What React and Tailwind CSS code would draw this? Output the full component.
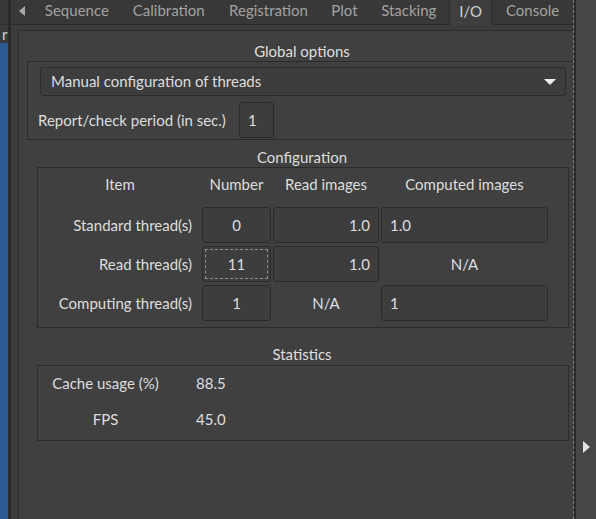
import React from "react";

const tabs = [
  { label: "Sequence", w: "w-[88px]" },
  { label: "Calibration", w: "w-[96px]" },
  { label: "Registration", w: "w-[104px]" },
  { label: "Plot", w: "w-[48px]" },
  { label: "Stacking", w: "w-[81px]" },
  { label: "I/O", w: "w-[43px]", active: true },
  { label: "Console", w: "w-[81px]" },
];

const Entry = ({ value, align = "center", focused }) => {
  const alignClass =
    align === "right"
      ? "justify-end pr-[8px]"
      : align === "left"
      ? "justify-start pl-[8px]"
      : "justify-center";
  return (
    <div
      className={
        "h-full rounded-[3px] border border-[#2b2b2b] bg-[#3d3d3d] flex items-center text-[#dcdfe2] " +
        alignClass +
        (focused
          ? " outline-1 outline-dashed outline-[#8a8a8a] outline-offset-[-4px]"
          : "")
      }
    >
      {value}
    </div>
  );
};

const Plain = ({ children }) => (
  <div className="h-full flex items-center justify-center text-[#dcdfe2]">
    {children}
  </div>
);

const Label = ({ children }) => (
  <div className="h-full flex items-center justify-end pr-[8px]">{children}</div>
);

export default function App() {
  return (
    <div className="w-[596px] h-[519px] flex overflow-hidden bg-[#3c3c3c] text-[15px] text-[#dedede] font-[family-name:Lato,sans-serif]">
      {/* left strip of the other pane */}
      <div className="w-[8px] shrink-0 flex flex-col">
        <div className="h-[25px] bg-[#383838] border-b border-[#2e2e2e]" />
        <div className="h-[18px] bg-[#3a3a3a] pl-[2px] leading-[18px] text-[#d4d4d4] overflow-hidden">
          r
        </div>
        <div className="flex-1 bg-[#2c5b91]" />
      </div>
      <div className="w-[3px] shrink-0 bg-[#2a2a2a]" />

      {/* notebook */}
      <div className="w-[562px] shrink-0 flex flex-col">
        <div className="h-[25px] flex bg-[#383838]">
          <div className="w-[22px] flex items-center justify-center border-b border-[#2c2c2c] pb-[2px]">
            <svg width="6" height="10" viewBox="0 0 6 10">
              <path d="M6 0 L0 5 L6 10 Z" fill="#a8a8a8" />
            </svg>
          </div>
          {tabs.map((t) =>
            t.active ? (
              <div
                key={t.label}
                className={
                  t.w +
                  " flex items-center justify-center pb-[3px] bg-[#3e3e3e] border-l border-r border-[#2c2c2c] text-[#c9d3dc]"
                }
              >
                {t.label}
              </div>
            ) : (
              <div
                key={t.label}
                className={
                  t.w +
                  " flex items-center justify-center pb-[3px] border-b border-[#2c2c2c] text-[#a2a2a2]"
                }
              >
                {t.label}
              </div>
            )
          )}
        </div>

        <div className="flex-1 pl-[7px] pt-[5px]">
          <div className="h-[600px] border-l border-t border-[#2c2c2c] bg-[#404040] flex flex-col">
            {/* Global options */}
            <div className="pl-[12px] pt-[11px] pb-[1px] leading-[18px] text-center">
              Global options
            </div>
            <div className="ml-[8px] h-[79px] border-l border-t border-b border-[#2c2c2c] pl-[10px] pt-[5px]">
              <div className="ml-[2px] w-[526px] h-[29px] rounded-[3px] border border-[#2c2c2c] bg-[#3d3d3d] flex items-center justify-between pl-[10px] pr-[9px]">
                <span>Manual configuration of threads</span>
                <svg width="12" height="6" viewBox="0 0 12 6">
                  <path d="M0 0 L12 0 L6 6 Z" fill="#ececec" />
                </svg>
              </div>
              <div className="mt-[6px] flex items-center h-[36px]">
                <div className="w-[201px]">Report/check period (in sec.)</div>
                <div className="w-[35px] h-[36px]">
                  <Entry value="1" align="left" />
                </div>
              </div>
            </div>

            {/* Configuration */}
            <div className="pl-[12px] pt-[8px] pb-[1px] leading-[18px] text-center">
              Configuration
            </div>
            <div className="ml-[18px] w-[532px] border border-[#2c2c2c] pl-[10px] pb-[6px]">
              <div className="grid grid-cols-[152px_69px_106px_167px] grid-rows-[36px_36px_36px_36px] gap-x-[2px] gap-y-[3px]">
                <div className="flex items-center justify-center pr-[8px] pb-[4px]">Item</div>
                <div className="flex items-center justify-center pb-[4px]">Number</div>
                <div className="flex items-center justify-center pb-[4px]">Read images</div>
                <div className="flex items-center justify-center pb-[4px]">Computed images</div>

                <Label>Standard thread(s)</Label>
                <Entry value="0" />
                <Entry value="1.0" align="right" />
                <Entry value="1.0" align="left" />

                <Label>Read thread(s)</Label>
                <Entry value="11" focused />
                <Entry value="1.0" align="right" />
                <Plain>N/A</Plain>

                <Label>Computing thread(s)</Label>
                <Entry value="1" />
                <Plain>N/A</Plain>
                <Entry value="1" align="left" />
              </div>
            </div>

            {/* Statistics */}
            <div className="pl-[12px] pt-[17px] pb-[2px] leading-[18px] text-center">
              Statistics
            </div>
            <div className="ml-[18px] w-[532px] h-[76px] border border-[#2c2c2c] pl-[10px]">
              <div className="flex items-center h-[35px]">
                <div className="w-[115px] text-center">Cache usage (%)</div>
                <div className="ml-[33px] text-[#dcdfe2]">88.5</div>
              </div>
              <div className="flex items-center h-[36px]">
                <div className="w-[115px] text-center">FPS</div>
                <div className="ml-[33px] text-[#dcdfe2]">45.0</div>
              </div>
            </div>
          </div>
        </div>
      </div>

      {/* pane handle */}
      <div className="w-px shrink-0 border-l border-dashed border-[#7c7c7c]" />
      <div className="w-[2px] shrink-0 bg-[#2a2a2a]" />
      <div className="flex-1 bg-[#464646] flex justify-center pt-[441px]">
        <svg width="7" height="12" viewBox="0 0 7 12">
          <path d="M0 0 L7 6 L0 12 Z" fill="#e2e2e2" />
        </svg>
      </div>
    </div>
  );
}
